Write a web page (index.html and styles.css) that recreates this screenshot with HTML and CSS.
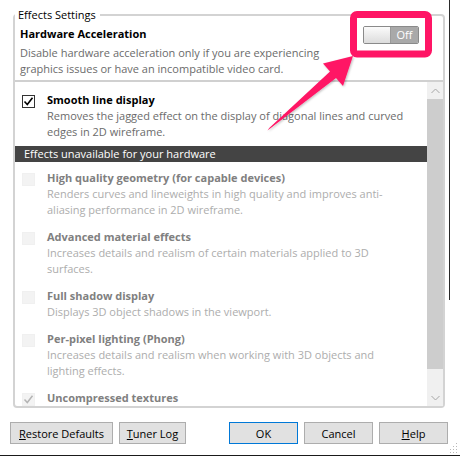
FILE: index.html
```html
<!DOCTYPE html>
<html>
<head>
<meta charset="utf-8">
<title>Effects Settings</title>
<link rel="stylesheet" href="styles.css">
</head>
<body>
<div class="window">
  <fieldset class="group">
    <legend>Effects Settings</legend>
    <div class="hw">
      <div class="hw-text">
        <div class="hw-title">Hardware Acceleration</div>
        <div class="hw-desc">Disable hardware acceleration only if you are experiencing<br>graphics issues or have an incompatible video card.</div>
      </div>
      <div class="toggle"><span class="thumb"></span><span class="state">Off</span></div>
    </div>
    <div class="list">
      <div class="list-body">
        <div class="item">
          <span class="cb checked"><svg width="11" height="11" viewBox="0 0 11 11"><path d="M1.5 5.5 L4.3 8.5 L9.5 1.8" fill="none" stroke="#000" stroke-width="1.6"/></svg></span>
          <div class="item-text">
            <div class="title">Smooth line display</div>
            <div class="desc">Removes the jagged effect on the display of diagonal lines and curved<br>edges in 2D wireframe.</div>
          </div>
        </div>
        <div class="band">Effects unavailable for your hardware</div>
        <div class="disabled">
          <div class="item off">
            <span class="cb"></span>
            <div class="item-text">
              <div class="title">High quality geometry (for capable devices)</div>
              <div class="desc">Renders curves and lineweights in high quality and improves anti-<br>aliasing performance in 2D wireframe.</div>
            </div>
          </div>
          <div class="item off">
            <span class="cb"></span>
            <div class="item-text">
              <div class="title">Advanced material effects</div>
              <div class="desc">Increases details and realism of certain materials applied to 3D<br>surfaces.</div>
            </div>
          </div>
          <div class="item off">
            <span class="cb"></span>
            <div class="item-text">
              <div class="title">Full shadow display</div>
              <div class="desc">Displays 3D object shadows in the viewport.</div>
            </div>
          </div>
          <div class="item off">
            <span class="cb"></span>
            <div class="item-text">
              <div class="title">Per-pixel lighting (Phong)</div>
              <div class="desc">Increases details and realism when working with 3D objects and<br>lighting effects.</div>
            </div>
          </div>
          <div class="item off">
            <span class="cb"><svg width="11" height="11" viewBox="0 0 11 11"><path d="M1.5 5.5 L4.3 8.5 L9.5 1.8" fill="none" stroke="#b4b4b4" stroke-width="1.5"/></svg></span>
            <div class="item-text">
              <div class="title">Uncompressed textures</div>
            </div>
          </div>
        </div>
      </div>
      <div class="scrollbar">
        <div class="sb-btn"><svg width="9" height="6" viewBox="0 0 9 6"><path d="M0.5 5 L4.5 1 L8.5 5" fill="none" stroke="#a6a6a6" stroke-width="1"/></svg></div>
        <div class="sb-thumb"></div>
        <div class="sb-track"></div>
        <div class="sb-btn down"><svg width="9" height="6" viewBox="0 0 9 6"><path d="M0.5 1 L4.5 5 L8.5 1" fill="none" stroke="#a6a6a6" stroke-width="1"/></svg></div>
      </div>
    </div>
  </fieldset>
  <div class="buttons">
    <div class="btn-group">
      <button class="btn w-restore"><u>R</u>estore Defaults</button>
      <button class="btn w-tuner"><u>T</u>uner Log</button>
    </div>
    <div class="btn-group">
      <button class="btn w-std default">OK</button>
      <button class="btn w-std">Cancel</button>
      <button class="btn w-std"><u>H</u>elp</button>
    </div>
  </div>
  <div class="edge"></div>
  <svg class="grip" width="10" height="10" viewBox="0 0 10 10">
    <g fill="#b9b9b9">
      <rect x="8" y="0" width="1" height="1"/>
      <rect x="5" y="3" width="1" height="1"/><rect x="8" y="3" width="1" height="1"/>
      <rect x="2" y="6" width="1" height="1"/><rect x="5" y="6" width="1" height="1"/><rect x="8" y="6" width="1" height="1"/>
      <rect x="-1" y="9" width="1" height="1"/><rect x="2" y="9" width="1" height="1"/><rect x="5" y="9" width="1" height="1"/><rect x="8" y="9" width="1" height="1"/>
    </g>
  </svg>
  <svg class="annot" width="460" height="456" viewBox="0 0 460 456">
    <defs>
      <filter id="sh" x="-20%" y="-20%" width="140%" height="140%">
        <feDropShadow dx="1" dy="1" stdDeviation="1" flood-color="#000" flood-opacity="0.25"/>
      </filter>
    </defs>
    <rect x="353.5" y="14.5" width="75" height="39.5" rx="3.5" fill="none" stroke="#ff1565" stroke-width="7"/>
    <polygon filter="url(#sh)" fill="#ff1565" points="267.5,130.5 269.5,127.8 330,71.4 323,63.5 353,56 343,86 336,78.1"/>
  </svg>
</div>
</body>
</html>
```

FILE: styles.css
```css
* { box-sizing: border-box; }
html, body { margin: 0; padding: 0; background: #fff; }
body {
  font-family: "Open Sans", "Noto Sans", sans-serif;
  font-size: 11px;
  color: #000;
}
.window {
  position: relative;
  width: 460px;
  height: 456px;
  overflow: hidden;
  border-bottom: 1px solid #1a1a1a;
}
.group {
  margin: 7px 15px 0 13px;
  padding: 0;
  border: 2px solid #d3d3d3;
  border-radius: 4px;
  min-width: 0;
}
.group legend {
  padding: 0 4px 0 3px;
  margin-left: 0;
  line-height: 16px;
  color: #000;
}
.hw {
  display: flex;
  justify-content: space-between;
  align-items: flex-start;
  padding: 3px 24px 3px 5px;
}
.hw-title { font-weight: bold; line-height: 16px; margin-bottom: 3px; }
.hw-desc { color: #6b6b6b; line-height: 16px; white-space: nowrap; }
.toggle {
  display: flex;
  width: 56px;
  height: 18px;
  border: 1px solid #8a8a8a;
  border-radius: 2px;
  overflow: hidden;
}
.thumb {
  width: 27px;
  background: linear-gradient(#fbfbfb, #dcdcdc);
  border-right: 1px solid #9a9a9a;
}
.state {
  flex: 1;
  background: #a9a9a9;
  color: #fff;
  text-align: center;
  line-height: 16px;
}
.list {
  display: flex;
  height: 326px;
  border-top: 2px solid #d0d0d0;
}
.list-body {
  flex: 1;
  min-width: 0;
  overflow: hidden;
  padding-top: 10px;
}
.item {
  display: flex;
  align-items: flex-start;
  gap: 12px;
  padding-left: 7px;
}
.cb {
  flex: none;
  width: 13px;
  height: 13px;
  margin-top: 3px;
  border: 1px solid #f0f0f0;
  background: #f3f3f3;
  display: flex;
  align-items: center;
  justify-content: center;
}
.cb.checked { border-color: #333; background: #fff; }
.item-text { min-width: 0; }
.title { font-weight: bold; line-height: 16px; white-space: nowrap; }
.desc { line-height: 16px; color: #6b6b6b; white-space: nowrap; }
.off .title { color: #808080; }
.off .desc { color: #adadad; }
.band {
  margin: 6px 0 8px;
  height: 16px;
  line-height: 16px;
  padding-left: 9px;
  background: #444;
  color: #fff;
}
.disabled {
  display: flex;
  flex-direction: column;
  gap: 11px;
}
.scrollbar {
  flex: none;
  width: 16px;
  display: flex;
  flex-direction: column;
  background: #f0f0f0;
}
.sb-btn {
  height: 17px;
  display: flex;
  align-items: center;
  justify-content: center;
}
.sb-thumb { height: 270px; background: #cdcdcd; }
.sb-track { flex: 1; }
.buttons {
  display: flex;
  justify-content: space-between;
  margin-top: 14px;
  padding: 0 12px 0 10px;
}
.btn-group { display: flex; gap: 6px; }
.btn {
  height: 22px;
  padding: 0;
  font-family: inherit;
  font-size: 11px;
  color: #000;
  background: #e1e1e1;
  border: 1px solid #adadad;
  border-radius: 0;
}
.btn.default { border-color: #0078d7; }
.w-restore { width: 103px; }
.w-tuner { width: 67px; }
.w-std { width: 69px; }
.edge {
  position: absolute;
  left: 449px;
  top: 0;
  width: 1px;
  height: 300px;
  background: #2a2a2a;
}
.grip {
  position: absolute;
  right: 2px;
  bottom: 2px;
}
.annot {
  position: absolute;
  left: 0;
  top: 0;
  pointer-events: none;
}
```
